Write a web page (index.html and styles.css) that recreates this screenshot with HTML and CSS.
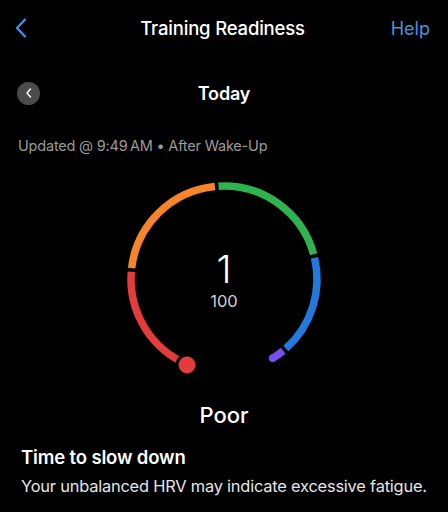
FILE: index.html
```html
<!DOCTYPE html>
<html lang="en">
<head>
    <meta charset="UTF-8">
    <meta name="viewport" content="width=device-width, initial-scale=1.0">
    <title>Training Readiness</title>
    <link rel="stylesheet" href="styles.css">
</head>
<body>
    <header class="nav">
        <svg class="nav-back" width="12" height="20" viewBox="0 0 12 20">
            <path d="M10 1.5 L2 10 L10 18.5" fill="none" stroke="#3f8fe4" stroke-width="2.4" stroke-linecap="round" stroke-linejoin="round"/>
        </svg>
        <div class="nav-title">Training Readiness</div>
        <div class="nav-help">Help</div>
    </header>

    <div class="day-row">
        <div class="day-prev">
            <svg width="8" height="10" viewBox="0 0 8 10">
                <path d="M5.5 1 L2 5 L5.5 9" fill="none" stroke="#ffffff" stroke-width="1.4" stroke-linecap="round" stroke-linejoin="round"/>
            </svg>
        </div>
        <div class="day-title">Today</div>
        <div></div>
    </div>

    <div class="updated">Updated @ 9:49&#8239;AM &bull; After Wake-Up</div>

    <div class="gauge">
        <svg width="210" height="210" viewBox="0 0 210 210">
            <g fill="none" stroke-width="7.5">
                <path d="M61.34 187.11 A93 93 0 0 1 12.29 97.70" stroke="#e43b3b"/>
                <path d="M12.64 94.15 A93 93 0 0 1 95.93 12.44" stroke="#f5842a"/>
                <path d="M99.48 12.16 A93 93 0 0 1 194.66 80.30" stroke="#2eb34e"/>
                <path d="M195.54 83.76 A93 93 0 0 1 166.87 174.44" stroke="#2379dd"/>
                <path d="M164.16 176.76 A93 93 0 0 1 153.59 184.30" stroke="#7a4cf2"/>
            </g>
            <circle cx="153.59" cy="184.30" r="3.75" fill="#7a4cf2"/>
            <circle cx="68" cy="191" r="11.5" fill="#000000"/>
            <circle cx="68" cy="191" r="8.5" fill="#e43b3b"/>
        </svg>
        <div class="gauge-value">
            <div class="score">1</div>
            <div class="score-max">100</div>
        </div>
    </div>

    <div class="level">Poor</div>

    <div class="advice">
        <div class="advice-title">Time to slow down</div>
        <div class="advice-text">Your unbalanced HRV may indicate excessive fatigue.</div>
    </div>
</body>
</html>
```

FILE: styles.css
```css
body {
    margin: 0;
    background-color: #000;
    color: #fff;
    font-family: Inter, "Liberation Sans", sans-serif;
    width: 448px;
    height: 512px;
    overflow: hidden;
}
.nav {
    display: grid;
    grid-template-columns: 1fr auto 1fr;
    align-items: center;
    height: 56px;
    padding: 0 18px 0 15px;
}
.nav-back {
    display: block;
}
.nav-title {
    font-size: 18.5px;
    font-weight: 500;
    letter-spacing: -0.18px;
}
.nav-help {
    justify-self: end;
    color: #4a90dc;
    font-size: 18px;
}
.day-row {
    display: grid;
    grid-template-columns: 1fr auto 1fr;
    align-items: center;
    height: 24px;
    margin-top: 25px;
    padding: 0 17px;
}
.day-prev {
    width: 23px;
    height: 23px;
    border-radius: 50%;
    background-color: #4b4b4b;
    display: flex;
    align-items: center;
    justify-content: center;
}
.day-prev svg {
    display: block;
}
.day-title {
    font-size: 18px;
    font-weight: 600;
    letter-spacing: -0.2px;
}
.updated {
    margin-top: 31px;
    padding-left: 18px;
    line-height: 20px;
    font-size: 14.5px;
    letter-spacing: -0.2px;
    color: #9a9a9a;
}
.gauge {
    position: relative;
    width: 210px;
    height: 210px;
    margin: 18px auto 0;
}
.gauge svg {
    display: block;
}
.gauge-value {
    position: absolute;
    left: 0;
    right: 0;
    top: 74px;
    text-align: center;
}
.score {
    font-size: 38px;
    font-weight: 300;
    line-height: 42px;
}
.score-max {
    font-size: 16.5px;
    color: #cfcfcf;
    line-height: 20px;
    margin-top: 1px;
}
.level {
    margin-top: 18px;
    text-align: center;
    font-size: 22px;
    font-weight: 500;
    line-height: 26px;
}
.advice {
    padding: 0 12px 0 21px;
    margin-top: 17px;
}
.advice-title {
    font-size: 18.5px;
    font-weight: 600;
    letter-spacing: -0.15px;
    line-height: 24px;
}
.advice-text {
    margin-top: 7px;
    font-size: 16.4px;
    letter-spacing: -0.2px;
    color: #e6e6e6;
    line-height: 20px;
    white-space: nowrap;
}
```
